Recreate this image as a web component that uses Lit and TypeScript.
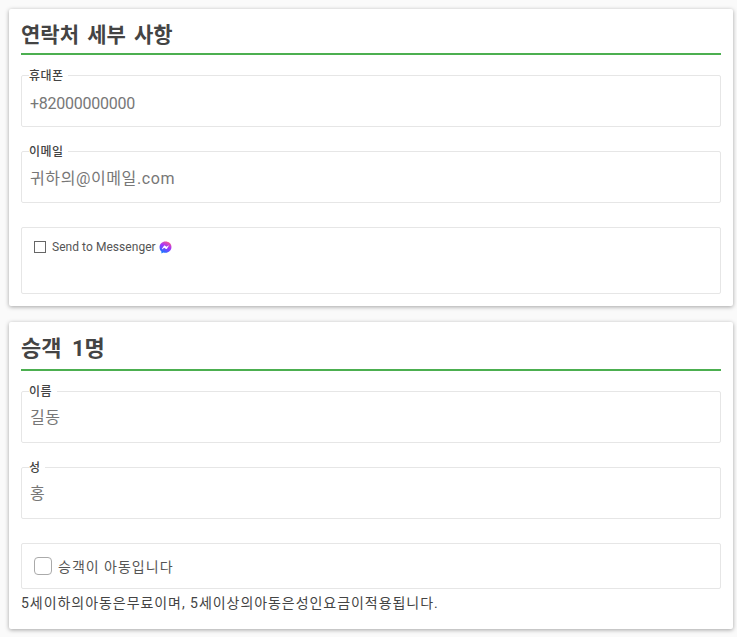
import { LitElement, html, css } from 'lit';
import { customElement } from 'lit/decorators.js';

@customElement('app-root')
export class AppRoot extends LitElement {
  static styles = css`
    :host {
      display: block;
      min-height: 637px;
      background: #fafafa;
      font-family: Roboto, "Noto Sans CJK KR", sans-serif;
      color: #444;
    }

    .page {
      display: flex;
      flex-direction: column;
      gap: 16px;
      padding: 9px 4px 8px 9px;
    }

    .card {
      display: flex;
      flex-direction: column;
      background: #fff;
      border-radius: 2px;
      padding: 12px;
      box-shadow: 0 1px 4px rgba(0, 0, 0, 0.35);
    }

    .title {
      margin: 0 0 20px;
      height: 34px;
      box-sizing: border-box;
      line-height: 28px;
      font-size: 21px;
      font-weight: 700;
      word-spacing: 3px;
      color: #444;
      border-bottom: 2px solid #4caf50;
    }

    .title--large {
      height: 37px;
      line-height: 30px;
      font-size: 22px;
      word-spacing: 5px;
    }

    .field {
      margin: 0 0 24px;
      padding: 0 8px;
      height: 52px;
      box-sizing: border-box;
      border: 1px solid #e6e6e6;
      border-radius: 2px;
      min-width: 0;
    }

    .field legend {
      margin-left: -1px;
      padding: 0 5px 0 0;
      height: 0;
      line-height: 0;
      font-size: 12px;
      font-weight: 500;
      letter-spacing: 0.4px;
      color: #444;
    }

    .field input {
      display: block;
      width: 100%;
      height: 52px;
      margin-top: -1px;
      padding: 0;
      border: none;
      outline: none;
      background: transparent;
      font: inherit;
      font-size: 16px;
      letter-spacing: 0.6px;
      color: #777;
    }

    .field input::placeholder {
      color: #777;
      opacity: 1;
    }

    .field input.phone {
      padding-top: 2px;
      letter-spacing: -0.25px;
    }

    .field input.email {
      padding-top: 1px;
    }

    .messenger {
      height: 67px;
      box-sizing: border-box;
      border: 1px solid #e6e6e6;
      border-radius: 2px;
      padding: 12px;
      display: flex;
      align-items: flex-start;
      gap: 6px;
      font-size: 12px;
      line-height: 14px;
      letter-spacing: 0.05px;
      color: #555;
    }

    .box {
      width: 12px;
      height: 12px;
      box-sizing: border-box;
      border: 1px solid #666;
      margin-top: 1px;
      flex: none;
    }

    .messenger-label {
      display: flex;
      align-items: center;
      gap: 3px;
    }

    .child-row {
      height: 46px;
      box-sizing: border-box;
      border: 1px solid #e6e6e6;
      border-radius: 2px;
      padding: 0 12px;
      display: flex;
      align-items: center;
      gap: 6px;
      font-size: 14px;
      letter-spacing: 1px;
      color: #555;
    }

    .round-box {
      width: 18px;
      height: 18px;
      box-sizing: border-box;
      border: 1px solid #aaa;
      border-radius: 4px;
      flex: none;
    }

    .note {
      margin: 4px 0 4px;
      font-size: 14px;
      line-height: 20px;
      letter-spacing: 0.95px;
      color: #444;
    }
  `;

  render() {
    return html`
      <div class="page">
        <section class="card">
          <h2 class="title">연락처 세부 사항</h2>
          <fieldset class="field">
            <legend>휴대폰</legend>
            <input class="phone" placeholder="+82000000000" />
          </fieldset>
          <fieldset class="field">
            <legend>이메일</legend>
            <input class="email" placeholder="귀하의@이메일.com" />
          </fieldset>
          <div class="messenger">
            <span class="box"></span>
            <span class="messenger-label">
              Send to Messenger
              <svg width="13" height="13" viewBox="0 0 24 24">
                <defs>
                  <linearGradient id="m" x1="0.3" y1="1" x2="0.8" y2="0">
                    <stop offset="0" stop-color="#0a7cff" />
                    <stop offset="0.55" stop-color="#a033ff" />
                    <stop offset="1" stop-color="#ff5c87" />
                  </linearGradient>
                </defs>
                <path
                  fill="url(#m)"
                  d="M12 1C5.8 1 1 5.5 1 11.6c0 3.2 1.3 5.9 3.5 7.8v3.6l3.4-1.9c1.3.4 2.6.6 4.1.6 6.2 0 11-4.5 11-10.6S18.2 1 12 1z"
                />
                <path fill="#fff" d="M5.5 14.5l3.4-5.3c.5-.8 1.6-1 2.4-.4l2.7 2 3.4-2.6c.4-.3 1 .2.7.6l-3.4 5.3c-.5.8-1.6 1-2.4.4l-2.7-2-3.4 2.6c-.4.3-1-.2-.7-.6z" />
              </svg>
            </span>
          </div>
        </section>

        <section class="card">
          <h2 class="title title--large">승객 1명</h2>
          <fieldset class="field">
            <legend>이름</legend>
            <input placeholder="길동" />
          </fieldset>
          <fieldset class="field">
            <legend>성</legend>
            <input placeholder="홍" />
          </fieldset>
          <label class="child-row">
            <span class="round-box"></span>
            승객이 아동입니다
          </label>
          <p class="note">5세이하의아동은무료이며, 5세이상의아동은성인요금이적용됩니다.</p>
        </section>
      </div>
    `;
  }
}
